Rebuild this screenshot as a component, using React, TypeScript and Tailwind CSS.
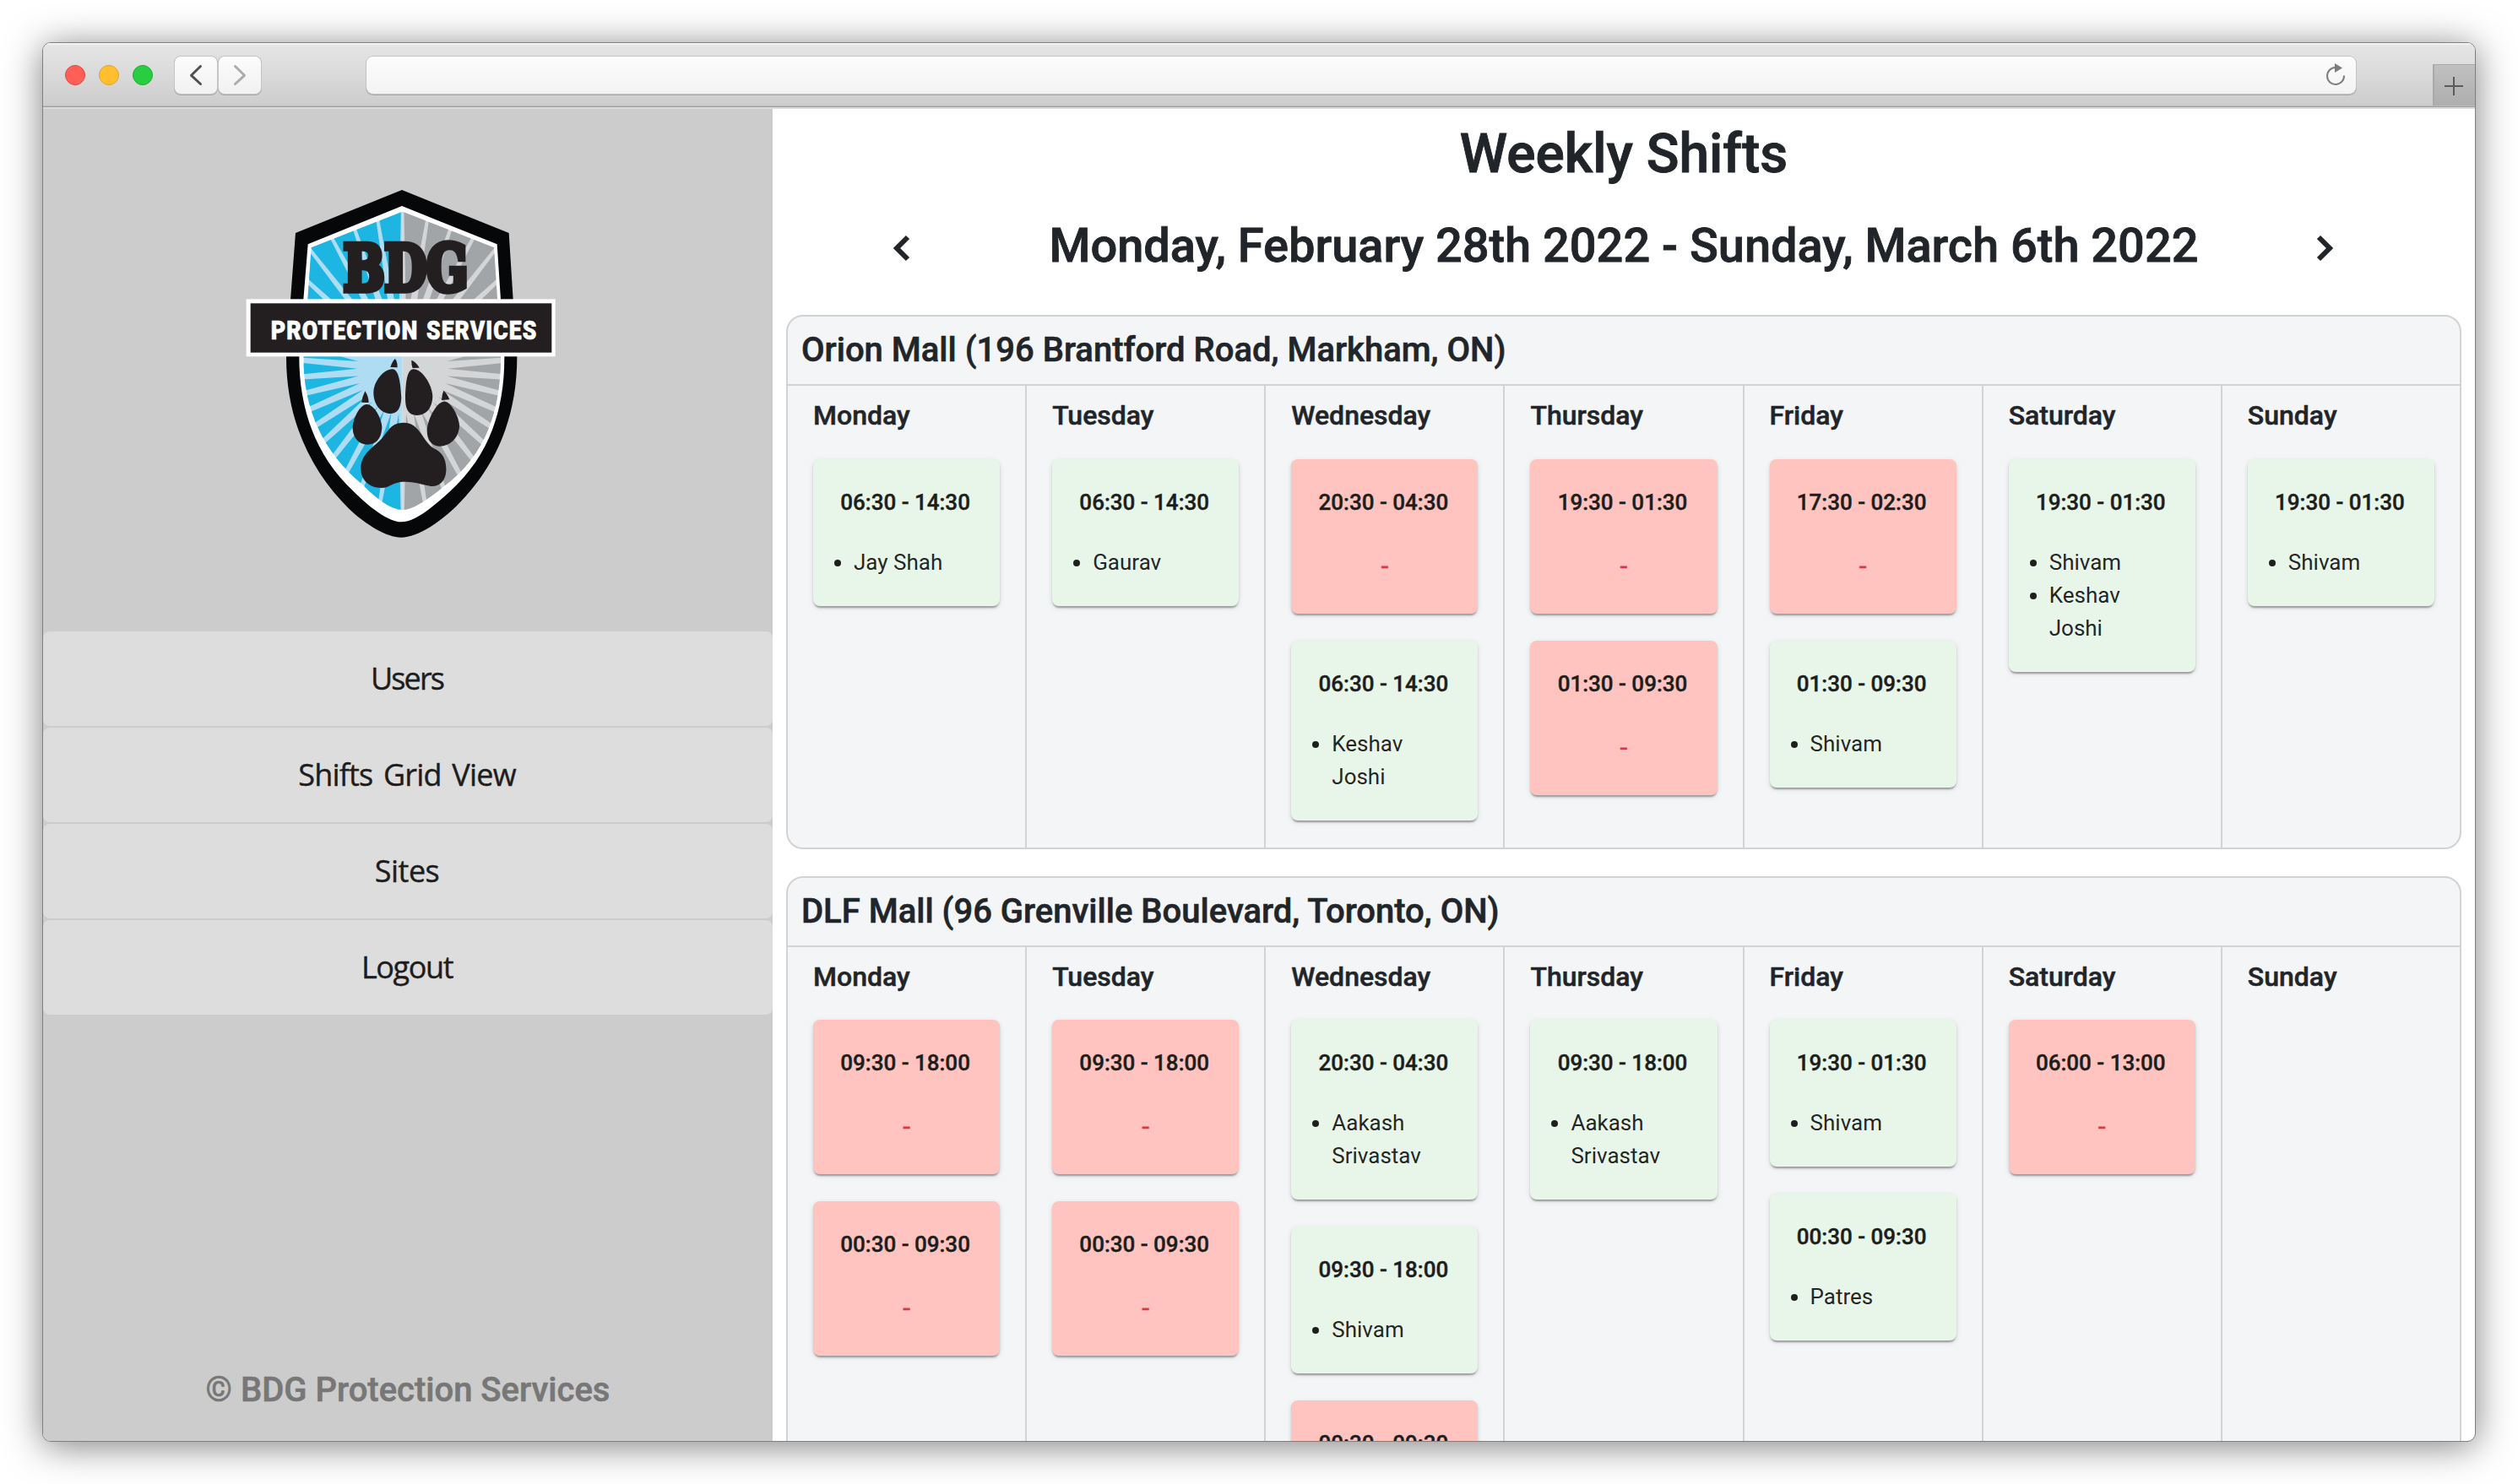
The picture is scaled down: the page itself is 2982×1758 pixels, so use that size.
import React from "react";

type Shift = { time: string; names: string[] };
type Site = { title: string; days: Shift[][] };

const DAYS = ["Monday", "Tuesday", "Wednesday", "Thursday", "Friday", "Saturday", "Sunday"];

const SITES: Site[] = [
  {
    title: "Orion Mall (196 Brantford Road, Markham, ON)",
    days: [
      [{ time: "06:30 - 14:30", names: ["Jay Shah"] }],
      [{ time: "06:30 - 14:30", names: ["Gaurav"] }],
      [
        { time: "20:30 - 04:30", names: [] },
        { time: "06:30 - 14:30", names: ["Keshav Joshi"] },
      ],
      [
        { time: "19:30 - 01:30", names: [] },
        { time: "01:30 - 09:30", names: [] },
      ],
      [
        { time: "17:30 - 02:30", names: [] },
        { time: "01:30 - 09:30", names: ["Shivam"] },
      ],
      [{ time: "19:30 - 01:30", names: ["Shivam", "Keshav Joshi"] }],
      [{ time: "19:30 - 01:30", names: ["Shivam"] }],
    ],
  },
  {
    title: "DLF Mall (96 Grenville Boulevard, Toronto, ON)",
    days: [
      [
        { time: "09:30 - 18:00", names: [] },
        { time: "00:30 - 09:30", names: [] },
      ],
      [
        { time: "09:30 - 18:00", names: [] },
        { time: "00:30 - 09:30", names: [] },
      ],
      [
        { time: "20:30 - 04:30", names: ["Aakash Srivastav"] },
        { time: "09:30 - 18:00", names: ["Shivam"] },
        { time: "00:30 - 09:30", names: [] },
      ],
      [{ time: "09:30 - 18:00", names: ["Aakash Srivastav"] }],
      [
        { time: "19:30 - 01:30", names: ["Shivam"] },
        { time: "00:30 - 09:30", names: ["Patres"] },
      ],
      [{ time: "06:00 - 13:00", names: [] }],
      [],
    ],
  },
];

const NAV = [
  { label: "Users", tracking: "tracking-[-1.9px]" },
  { label: "Shifts Grid View", tracking: "tracking-[-0.8px] [word-spacing:4px]" },
  { label: "Sites", tracking: "tracking-[-0.5px]" },
  { label: "Logout", tracking: "tracking-[-1.4px]" },
];

// Wedges of the sunburst behind the paw: each starts at radius 160 and widens outwards.
const RAYS = Array.from({ length: 38 }, (_, i) => (i + 0.5) * (360 / 38));

const SHIELD_FACE =
  "M620 122 L945 250 L957 435 L969 640 C969 830 915 990 765 1100 C715 1140 660 1182 620 1182 C575 1182 520 1135 475 1090 C320 960 268 800 268 640 L283 435 L296 250 Z";

function Logo() {
  return (
    <svg viewBox="0 0 1230 1320" className="h-[440px] w-[410px]">
      <defs>
        <clipPath id="face">
          <path d={SHIELD_FACE} />
        </clipPath>
        <clipPath id="left">
          <rect x="0" y="0" width="620" height="1320" />
        </clipPath>
        <clipPath id="right">
          <rect x="620" y="0" width="610" height="1320" />
        </clipPath>
      </defs>
      <path
        fill="#050708"
        d="M618 45 L998 198 L1013 435 L1027 640 C1027 890 925 1060 800 1180 C735 1240 665 1280 615 1280 C565 1280 490 1235 430 1178 C300 1050 207 870 207 640 L222 435 L240 198 Z"
      />
      <path
        fill="#fff"
        d="M618 102 L956 238 L969 435 L982 640 C982 850 915 1000 790 1115 C730 1170 665 1225 615 1225 C570 1225 500 1170 445 1115 C310 990 253 820 253 640 L268 435 L284 238 Z"
      />
      <g clipPath="url(#face)">
        <rect x="200" y="100" width="420" height="1100" fill="#aedcf3" />
        <rect x="620" y="100" width="400" height="1100" fill="#d4d5d7" />
        <g clipPath="url(#left)" fill="#1db5e2">
          {RAYS.map((a) => (
            <path key={a} d="M620 520 L579 120 L661 120 Z" transform={`rotate(${a} 620 680)`} />
          ))}
        </g>
        <g clipPath="url(#right)" fill="#a1a5a7">
          {RAYS.map((a) => (
            <path key={a} d="M620 520 L579 120 L661 120 Z" transform={`rotate(${a} 620 680)`} />
          ))}
        </g>
      </g>
      <text
        x="410"
        y="403"
        textLength="443"
        lengthAdjust="spacingAndGlyphs"
        fontSize="222"
        fontWeight="700"
        fill="#231f20"
        stroke="#231f20"
        strokeWidth="23"
        className="font-['DejaVu_Serif',serif]"
      >
        BDG
      </text>
      <rect x="65" y="433" width="1098" height="204" fill="#fff" />
      <rect x="80" y="448" width="1070" height="175" fill="#231f20" />
      <g
        fontSize="96"
        fontWeight="900"
        fill="#fff"
        stroke="#fff"
        strokeWidth="2"
        letterSpacing="4"
        className="font-[Roboto,sans-serif]"
      >
        <text x="152" y="576" textLength="524" lengthAdjust="spacingAndGlyphs">
          PROTECTION
        </text>
        <text x="705" y="576" textLength="394" lengthAdjust="spacingAndGlyphs">
          SERVICES
        </text>
      </g>
      <g fill="#231f20">
        <path d="M625 872 C685 872 690 945 738 967 C770 985 776 1015 775 1045 C772 1085 745 1105 710 1096 C670 1085 650 1082 620 1082 C585 1084 575 1103 545 1104 C500 1103 472 1075 472 1035 C472 985 510 965 545 930 C570 900 580 872 625 872 Z" />
        <path d="M493 807 C520 807 547 860 547 890 C545 930 525 950 495 950 C465 950 443 925 443 890 C443 860 468 807 493 807 Z" />
        <path d="M585 682 C608 685 612 730 616 785 C613 825 600 840 575 840 C540 838 517 805 517 765 C517 725 555 680 585 682 Z" />
        <path d="M660 682 C690 682 727 740 727 780 C725 820 705 846 670 846 C635 844 630 815 630 780 C632 735 634 682 660 682 Z" />
        <path d="M768 797 C795 797 822 855 822 885 C820 925 790 956 752 956 C720 955 707 930 707 900 C707 865 740 797 768 797 Z" />
        <path d="M577 675 Q583 655 594 645 Q602 655 602 676 Z" />
        <path d="M652 650 Q668 656 680 677 L656 678 Q651 665 652 650 Z" />
        <path d="M487 760 Q500 780 500 801 L474 800 Q478 778 487 760 Z" />
        <path d="M766 758 Q780 770 787 790 L759 792 Q760 772 766 758 Z" />
      </g>
    </svg>
  );
}

function TitleBar() {
  return (
    <div className="flex h-[78px] shrink-0 flex-col">
      <div className="flex h-[74px] items-stretch bg-linear-to-b from-[#e6e6e6] to-[#cdcdcd] shadow-[inset_0_2px_0_#f2f2f2]">
        <div className="flex items-center gap-4 pt-px pl-[26px]">
          <span className="size-6 rounded-full border border-[#e2463f] bg-[#ff5f57]" />
          <span className="size-6 rounded-full border border-[#e1a032] bg-[#ffbf2f]" />
          <span className="size-6 rounded-full border border-[#1dac2d] bg-[#28cd41]" />
        </div>
        <div className="flex gap-0.5 pt-4 pl-[26px]">
          <span className="flex h-11 w-[50px] items-center justify-center rounded-[7px] bg-linear-to-b from-[#fcfcfc] to-[#f1f1f1] shadow-[0_0_0_1px_#c4c4c4,0_1px_0_1px_#a8a8a8]">
            <svg viewBox="0 0 50 44" className="h-11 w-[50px]" fill="none" stroke="#505050" strokeWidth="3" strokeLinecap="round" strokeLinejoin="round">
              <path d="M30.500 11.500 L19.500 22.300 L30.500 32.500" />
            </svg>
          </span>
          <span className="flex h-11 w-[50px] items-center justify-center rounded-[7px] bg-linear-to-b from-[#fcfcfc] to-[#f1f1f1] shadow-[0_0_0_1px_#c4c4c4,0_1px_0_1px_#a8a8a8]">
            <svg viewBox="0 0 50 44" className="h-11 w-[50px]" fill="none" stroke="#ababab" strokeWidth="3" strokeLinecap="round" strokeLinejoin="round">
              <path d="M19.500 11.500 L30.500 22.300 L19.500 32.500" />
            </svg>
          </span>
        </div>
        <div className="mt-4 ml-[125px] flex h-11 w-[2356px] justify-end rounded-[8px] bg-linear-to-b from-[#fcfcfc] to-[#f3f3f3] pr-[10px] shadow-[0_0_0_1px_#c4c4c4,0_1px_0_1px_#a8a8a8]">
          <svg viewBox="0 0 28 44" className="h-11 w-7" fill="none">
            <path d="M13.500 13 A10 10 0 1 0 24 22.500" stroke="#7d7d7d" strokeWidth="2" />
            <path d="M13 8 L22 13.500 L13 19 Z" fill="#7d7d7d" />
          </svg>
        </div>
        <div className="mt-[25px] ml-auto flex h-[49px] w-[50px] border-t border-l-2 border-t-[#a8a8a8] border-l-[#a9a9a9] bg-linear-to-b from-[#c0c0c0] to-[#aeaeae]">
          <svg viewBox="0 0 48 48" className="size-12" stroke="#5a5a5a" strokeWidth="2">
            <path d="M12 25 H34 M23 14 V36" />
          </svg>
        </div>
      </div>
      <div className="h-px bg-[#bcbcbc]" />
      <div className="h-px bg-[#9c9c9c]" />
      <div className="h-0.5 bg-[#dcdcdc]" />
    </div>
  );
}

function Sidebar() {
  return (
    <aside className="flex w-[864px] shrink-0 flex-col bg-[#ccc]">
      <div className="mt-[81px] ml-[219px]">
        <Logo />
      </div>
      <nav className="mt-[98px] flex flex-col gap-0.5">
        {NAV.map(({ label, tracking }) => (
          <a
            key={label}
            className={`flex h-28 items-center justify-center rounded-lg bg-[#ddd] pr-0.5 font-['Open_Sans',sans-serif] text-[36px] font-medium text-[#1d1d1d] [-webkit-text-stroke:0.4px] ${tracking}`}
          >
            {label}
          </a>
        ))}
      </nav>
      <p className="mt-auto mb-9 text-center text-[40px] leading-12 font-medium text-[#777] [-webkit-text-stroke:0.6px]">
        © BDG Protection Services
      </p>
    </aside>
  );
}

function ShiftCard({ shift }: { shift: Shift }) {
  const open = shift.names.length === 0;
  return (
    <div
      className={`flex flex-col gap-8 rounded-lg py-8 text-[26px] leading-[39px] text-black/87 shadow-[0_4px_2px_-2px_rgba(0,0,0,0.2),0_2px_2px_rgba(0,0,0,0.14),0_2px_6px_rgba(0,0,0,0.12)] ${
        open ? "bg-[#ffc4c0]" : "bg-[#e8f5e9]"
      }`}
    >
      <div className="pr-[3px] text-center font-medium whitespace-nowrap text-[#1c1e1c] [-webkit-text-stroke:0.4px]">
        {shift.time}
      </div>
      {open ? (
        <div className="pb-0.5 text-center text-[32px] leading-[46px] text-[#dc3545] [-webkit-text-stroke:0.4px]">-</div>
      ) : (
        <ul className="list-disc pr-8 pl-12">
          {shift.names.map((n) => (
            <li key={n}>{n}</li>
          ))}
        </ul>
      )}
    </div>
  );
}

function SitePanel({ site }: { site: Site }) {
  return (
    <section className="shrink-0 overflow-hidden rounded-[20px] border-2 border-[#d3d3d3] bg-[#f4f5f7]">
      <h3 className="h-[82px] border-b-2 border-[#d3d3d3] pl-4 text-[40px] leading-[80px] font-medium [-webkit-text-stroke:0.6px]">
        {site.title}
      </h3>
      <div className="grid w-[calc(100%+2px)] grid-cols-7">
        {site.days.map((shifts, i) => (
          <div key={DAYS[i]} className="flex flex-col border-r-2 border-[#d3d3d3] px-[30px] pb-8">
            <h4 className="mt-4 mb-8 text-[32px] leading-[38.4px] font-medium [-webkit-text-stroke:0.5px]">{DAYS[i]}</h4>
            <div className="flex flex-col gap-8">
              {shifts.map((s) => (
                <ShiftCard key={s.time} shift={s} />
              ))}
            </div>
          </div>
        ))}
      </div>
    </section>
  );
}

export default function App() {
  return (
    <div className="h-[1758px] w-[2982px] overflow-hidden bg-white p-[50px] font-[Roboto,sans-serif] text-[#212529]">
      <div className="flex h-[1658px] w-[2882px] flex-col overflow-hidden rounded-[10px] border border-[#7f7f7f] bg-white shadow-[0_5px_44px_rgba(0,0,0,0.5)]">
        <TitleBar />
        <div className="flex min-h-0 flex-1">
          <Sidebar />
          <main className="flex min-w-0 flex-1 flex-col overflow-hidden px-4 pt-4">
            <h1 className="text-center text-[64px] leading-[76px] font-medium [-webkit-text-stroke:0.9px]">Weekly Shifts</h1>
            <div className="mt-9 mb-[48.4px] flex h-[68px] items-center justify-between pr-[150px] pl-[125px]">
              <svg viewBox="0 0 24 32" className="mt-1.5 h-8 w-6" fill="none" stroke="#212529" strokeWidth="6">
                <path d="M19 3 L6 16 L19 29" />
              </svg>
              <h2 className="ml-[25px] text-[56px] leading-[68px] font-medium tracking-[-0.04px] whitespace-nowrap [-webkit-text-stroke:0.8px]">
                Monday, February 28th 2022 - Sunday, March 6th 2022
              </h2>
              <svg viewBox="0 0 24 32" className="mt-1.5 h-8 w-6" fill="none" stroke="#212529" strokeWidth="6">
                <path d="M5 3 L18 16 L5 29" />
              </svg>
            </div>
            <div className="flex flex-col gap-8">
              {SITES.map((s) => (
                <SitePanel key={s.title} site={s} />
              ))}
            </div>
          </main>
        </div>
      </div>
    </div>
  );
}
